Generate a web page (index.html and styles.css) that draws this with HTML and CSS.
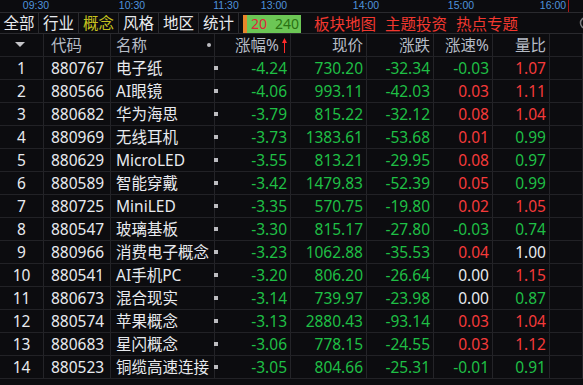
FILE: index.html
```html
<!DOCTYPE html>
<html lang="zh-CN">
<head>
    <meta charset="UTF-8">
    <title>概念板块</title>
    <link rel="stylesheet" href="styles.css">
</head>
<body>

    <!-- 分时刻度 -->
    <div class="timeline">
        <span class="time" style="left: 36px">09:30</span>
        <span class="time" style="left: 132px">10:30</span>
        <span class="time" style="left: 226px">11:30</span>
        <span class="time" style="left: 274px">13:00</span>
        <span class="time" style="left: 366px">14:00</span>
        <span class="time" style="left: 461px">15:00</span>
        <span class="time" style="left: 553px">16:00</span>
        <span class="now-line"></span>
    </div>

    <!-- 标签栏 -->
    <div class="tabbar">
        <span class="tab">全部</span>
        <span class="tab">行业</span>
        <span class="tab active">概念</span>
        <span class="tab">风格</span>
        <span class="tab">地区</span>
        <span class="tab">统计</span>
        <div class="ratio-bar">
            <span class="ratio-up">20</span>
            <span class="ratio-down">240</span>
        </div>
        <div class="links">
            <span>板块地图</span>
            <span>主题投资</span>
            <span>热点专题</span>
        </div>
        <svg class="search-icon" width="16" height="16" viewBox="0 0 16 16">
            <circle cx="8" cy="8" r="5.5" fill="none" stroke="#7a7a7e" stroke-width="1.5"/>
        </svg>
    </div>

    <!-- 表头 -->
    <div class="row head">
        <div class="cell idx">
            <svg width="10" height="6" viewBox="0 0 10 6"><path d="M0 0 H10 L5 5 Z" fill="#c4c4c8"/></svg>
        </div>
        <div class="cell code">代码</div>
        <div class="cell name"><span>名称</span><i class="dot"></i></div>
        <div class="cell num sort">涨幅%<svg width="5" height="15" viewBox="0 0 5 15"><path d="M2.5 0 L5 5 H3 V15 H2 V5 H0 Z" fill="#ff2a2a"/></svg></div>
        <div class="cell num">现价</div>
        <div class="cell num">涨跌</div>
        <div class="cell num">涨速%</div>
        <div class="cell num">量比</div>
        <div class="cell"></div>
    </div>

    <!-- 数据行 -->
    <div class="row">
        <div class="cell idx">1</div><div class="cell code">880767</div><div class="cell name">电子纸</div>
        <div class="cell num pct"><i class="mark"></i><span class="down">-4.24</span></div>
        <div class="cell num down">730.20</div><div class="cell num down">-32.34</div>
        <div class="cell num down">-0.03</div><div class="cell num up">1.07</div><div class="cell"></div>
    </div>
    <div class="row">
        <div class="cell idx">2</div><div class="cell code">880566</div><div class="cell name">AI眼镜</div>
        <div class="cell num pct"><i class="mark"></i><span class="down">-4.06</span></div>
        <div class="cell num down">993.11</div><div class="cell num down">-42.03</div>
        <div class="cell num up">0.03</div><div class="cell num up">1.11</div><div class="cell"></div>
    </div>
    <div class="row">
        <div class="cell idx">3</div><div class="cell code">880682</div><div class="cell name">华为海思</div>
        <div class="cell num pct"><i class="mark"></i><span class="down">-3.79</span></div>
        <div class="cell num down">815.22</div><div class="cell num down">-32.12</div>
        <div class="cell num up">0.08</div><div class="cell num up">1.04</div><div class="cell"></div>
    </div>
    <div class="row">
        <div class="cell idx">4</div><div class="cell code">880969</div><div class="cell name">无线耳机</div>
        <div class="cell num pct"><i class="mark"></i><span class="down">-3.73</span></div>
        <div class="cell num down">1383.61</div><div class="cell num down">-53.68</div>
        <div class="cell num up">0.01</div><div class="cell num down">0.99</div><div class="cell"></div>
    </div>
    <div class="row">
        <div class="cell idx">5</div><div class="cell code">880629</div><div class="cell name">MicroLED</div>
        <div class="cell num pct"><i class="mark"></i><span class="down">-3.55</span></div>
        <div class="cell num down">813.21</div><div class="cell num down">-29.95</div>
        <div class="cell num up">0.08</div><div class="cell num down">0.97</div><div class="cell"></div>
    </div>
    <div class="row">
        <div class="cell idx">6</div><div class="cell code">880589</div><div class="cell name">智能穿戴</div>
        <div class="cell num pct"><i class="mark"></i><span class="down">-3.42</span></div>
        <div class="cell num down">1479.83</div><div class="cell num down">-52.39</div>
        <div class="cell num up">0.05</div><div class="cell num down">0.99</div><div class="cell"></div>
    </div>
    <div class="row">
        <div class="cell idx">7</div><div class="cell code">880725</div><div class="cell name">MiniLED</div>
        <div class="cell num pct"><i class="mark"></i><span class="down">-3.35</span></div>
        <div class="cell num down">570.75</div><div class="cell num down">-19.80</div>
        <div class="cell num up">0.02</div><div class="cell num up">1.05</div><div class="cell"></div>
    </div>
    <div class="row">
        <div class="cell idx">8</div><div class="cell code">880547</div><div class="cell name">玻璃基板</div>
        <div class="cell num pct"><i class="mark"></i><span class="down">-3.30</span></div>
        <div class="cell num down">815.17</div><div class="cell num down">-27.80</div>
        <div class="cell num down">-0.03</div><div class="cell num down">0.74</div><div class="cell"></div>
    </div>
    <div class="row">
        <div class="cell idx">9</div><div class="cell code">880966</div><div class="cell name">消费电子概念</div>
        <div class="cell num pct"><i class="mark"></i><span class="down">-3.23</span></div>
        <div class="cell num down">1062.88</div><div class="cell num down">-35.53</div>
        <div class="cell num up">0.04</div><div class="cell num">1.00</div><div class="cell"></div>
    </div>
    <div class="row">
        <div class="cell idx">10</div><div class="cell code">880541</div><div class="cell name">AI手机PC</div>
        <div class="cell num pct"><i class="mark"></i><span class="down">-3.20</span></div>
        <div class="cell num down">806.20</div><div class="cell num down">-26.64</div>
        <div class="cell num">0.00</div><div class="cell num up">1.15</div><div class="cell"></div>
    </div>
    <div class="row">
        <div class="cell idx">11</div><div class="cell code">880673</div><div class="cell name">混合现实</div>
        <div class="cell num pct"><i class="mark"></i><span class="down">-3.14</span></div>
        <div class="cell num down">739.97</div><div class="cell num down">-23.98</div>
        <div class="cell num">0.00</div><div class="cell num down">0.87</div><div class="cell"></div>
    </div>
    <div class="row">
        <div class="cell idx">12</div><div class="cell code">880574</div><div class="cell name">苹果概念</div>
        <div class="cell num pct"><i class="mark"></i><span class="down">-3.13</span></div>
        <div class="cell num down">2880.43</div><div class="cell num down">-93.14</div>
        <div class="cell num up">0.03</div><div class="cell num up">1.04</div><div class="cell"></div>
    </div>
    <div class="row">
        <div class="cell idx">13</div><div class="cell code">880683</div><div class="cell name">星闪概念</div>
        <div class="cell num pct"><i class="mark"></i><span class="down">-3.06</span></div>
        <div class="cell num down">778.15</div><div class="cell num down">-24.55</div>
        <div class="cell num up">0.03</div><div class="cell num up">1.12</div><div class="cell"></div>
    </div>
    <div class="row">
        <div class="cell idx">14</div><div class="cell code">880523</div><div class="cell name">铜缆高速连接</div>
        <div class="cell num pct"><i class="mark"></i><span class="down">-3.05</span></div>
        <div class="cell num down">804.66</div><div class="cell num down">-25.31</div>
        <div class="cell num down">-0.01</div><div class="cell num down">0.91</div><div class="cell"></div>
    </div>

</body>
</html>
```

FILE: styles.css
```css
/* 基本 */
* {
    box-sizing: border-box;
}

body {
    margin: 0;
    width: 583px;
    height: 385px;
    overflow: hidden;
    background-color: #0c0c0f;
    color: #e8eaee;
    font-family: "Noto Sans", "Noto Sans CJK SC", sans-serif;
    font-size: 15.5px;
}

/* 分时刻度 */
.timeline {
    position: relative;
    height: 13px;
    overflow: hidden;
    border-bottom: 1px solid #2a2a2e;
}

.time {
    position: absolute;
    top: 0;
    transform: translateX(-50%);
    font-family: "Liberation Sans", sans-serif;
    font-size: 10.5px;
    line-height: 10px;
    color: #4f93dc;
}

.now-line {
    position: absolute;
    left: 568px;
    top: 0;
    width: 1px;
    height: 12px;
    background-color: #a81616;
}

/* 标签栏 */
.tabbar {
    display: flex;
    align-items: center;
    height: 21px;
    border-bottom: 1px solid #2a2a2e;
}

.tab {
    width: 40px;
    height: 100%;
    line-height: 20px;
    text-align: center;
    border-right: 1px solid #2a2a2e;
}

.tab:first-child {
    width: 39px;
}

.tab.active {
    color: #c6c21e;
}

.ratio-bar {
    display: flex;
    align-self: flex-end;
    justify-content: space-between;
    width: 58px;
    height: 18px;
    margin-left: 4px;
    padding: 0 2px 0 4px;
    background-color: #6cc655;
    border-left: 4px solid #e8872a;
    font-size: 14px;
    line-height: 18px;
}

.ratio-up {
    color: #e0243c;
}

.ratio-down {
    color: #2a7212;
}

.links {
    display: flex;
    gap: 9px;
    margin-left: 13px;
    color: #f2382f;
}

.search-icon {
    margin-left: auto;
    margin-right: -11px;
}

/* 表格 */
.row {
    display: grid;
    grid-template-columns: 44px 67px 104px 76px 76px 67px 59px 57px 1fr;
    height: 23px;
    border-bottom: 1px solid #222226;
}

.cell {
    height: 22px;
    line-height: 22px;
    white-space: nowrap;
    overflow: hidden;
    border-right: 1px solid #242428;
}

.head .cell {
    color: #b6bcc6;
}

.idx {
    text-align: center;
}

.head .idx {
    display: flex;
    align-items: center;
    justify-content: center;
    padding-right: 3px;
}

.code {
    padding-left: 7px;
}

.name {
    padding-left: 5px;
}

.head .name {
    display: flex;
    align-items: center;
    justify-content: space-between;
    padding-right: 3px;
}

.dot {
    width: 4px;
    height: 4px;
    border-radius: 50%;
    background-color: #bdbdc2;
}

.num {
    text-align: right;
    padding-right: 3px;
}

.sort {
    display: flex;
    align-items: center;
    justify-content: flex-end;
    gap: 3px;
}

.pct {
    display: flex;
    align-items: center;
    justify-content: space-between;
    overflow: visible;
}

.mark {
    width: 4px;
    height: 4px;
    margin-left: -1px;
    background-color: #bcbcc0;
}

.up {
    color: #f53a3a;
}

.down {
    color: #1fbf45;
}
```
